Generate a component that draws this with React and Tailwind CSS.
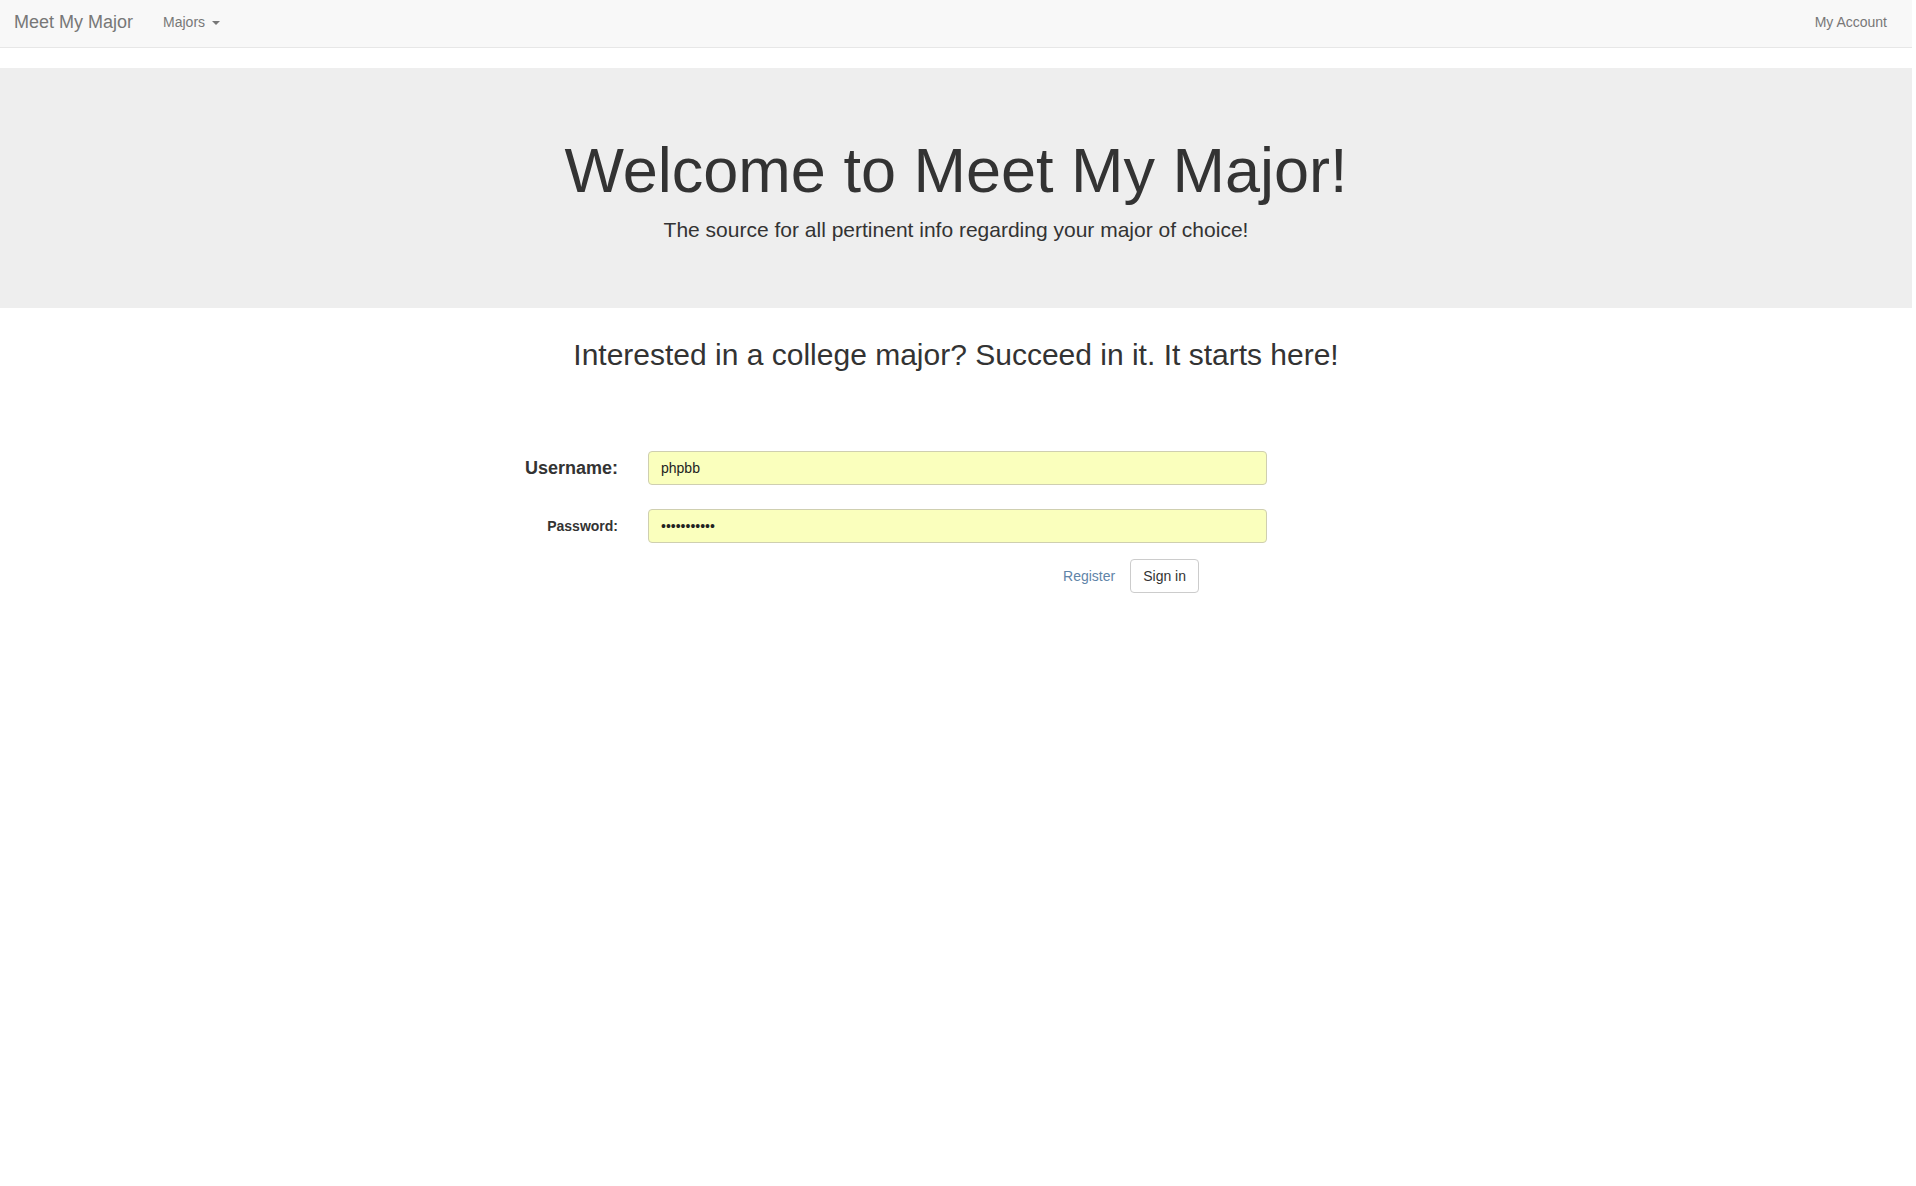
import { useState } from "react";

export default function App() {
  const [username, setUsername] = useState("phpbb");
  const [password, setPassword] = useState("phpbbphpbb1");

  return (
    <div
      className="min-h-screen w-[1912px] bg-white text-[#333]"
      style={{ fontFamily: '"Liberation Sans", Arial, sans-serif' }}
    >
      {/* navbar */}
      <nav className="flex h-[48px] items-start justify-between border-b border-[#e7e7e7] bg-[#f8f8f8]">
        <div className="flex items-start pt-[12px]">
          <a className="ml-[14px] text-[18px] leading-[20px] text-[#777]">Meet My Major</a>
          <a className="ml-[30px] flex items-center text-[14px] leading-[20px] text-[#777]">
            Majors
            <span className="ml-[7px] mt-[1px] h-0 w-0 border-x-[4px] border-t-[4px] border-x-transparent border-t-[#777]" />
          </a>
        </div>
        <a className="mr-[25px] pt-[12px] text-[14px] leading-[20px] text-[#777]">My Account</a>
      </nav>

      {/* jumbotron */}
      <section className="mt-[20px] bg-[#eee] pb-[48px] pt-[48px] text-center">
        <h1 className="mt-[20px] mb-[10px] text-[63px] leading-[1.1] text-[#333]">
          Welcome to Meet My Major!
        </h1>
        <p className="mb-[15px] text-[21px] leading-[30px] text-[#333]">
          The source for all pertinent info regarding your major of choice!
        </p>
      </section>

      <main className="mx-auto mt-[30px] w-[1170px]">
        <h2 className="text-center text-[30px] leading-[33px] text-[#333]">
          Interested in a college major? Succeed in it. It starts here!
        </h2>

        <form className="mt-[80px] flex flex-col" onSubmit={(e) => e.preventDefault()}>
          <div className="flex items-center">
            <label className="w-[247px] text-right text-[18px] font-bold">Username:</label>
            <input
              className="ml-[30px] h-[34px] w-[619px] rounded-[4px] border border-[#cfcfb0] bg-[#faffbd] px-[12px] text-[14px] text-[#222] outline-none"
              value={username}
              onChange={(e) => setUsername(e.target.value)}
            />
          </div>
          <div className="mt-[24px] flex items-center">
            <label className="w-[247px] text-right text-[14px] font-bold">Password:</label>
            <input
              type="password"
              className="ml-[30px] h-[34px] w-[619px] rounded-[4px] border border-[#cfcfb0] bg-[#faffbd] px-[12px] text-[14px] text-[#222] outline-none"
              value={password}
              onChange={(e) => setPassword(e.target.value)}
            />
          </div>
          <div className="mt-[16px] flex w-[828px] items-center justify-end gap-[3px]">
            <a className="px-[12px] text-[14px] leading-[20px] text-[#5f84a8]">Register</a>
            <button
              type="submit"
              className="h-[34px] rounded-[4px] border border-[#ccc] bg-white px-[12px] text-[14px] text-[#333]"
            >
              Sign in
            </button>
          </div>
        </form>
      </main>
    </div>
  );
}
